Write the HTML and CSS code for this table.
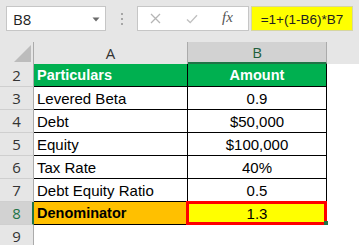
FILE: index.html
```html
<!DOCTYPE html>
<html>
<head>
<meta charset="utf-8">
<link rel="stylesheet" href="styles.css">
</head>
<body>
<div class="app">
  <div class="toolbar">
    <div class="namebox">
      <span class="name">B8</span>
      <svg class="caret" width="8" height="5" viewBox="0 0 8 5"><path d="M0.5 0.5 H7.5 L4 4.5 Z" fill="#6b6b6b"/></svg>
    </div>
    <div class="dots"><i></i><i></i><i></i></div>
    <div class="actions">
      <svg class="icon-x" width="11" height="11" viewBox="0 0 11 11"><path d="M1 1 L10 10 M10 1 L1 10" stroke="#b5b5b5" stroke-width="1.3" fill="none"/></svg>
      <svg class="icon-check" width="12" height="10" viewBox="0 0 12 10"><path d="M1 5.5 L4.2 8.6 L11 1.2" stroke="#c0c0c0" stroke-width="1.4" fill="none"/></svg>
      <span class="fx">fx</span>
    </div>
    <div class="formula">=1+(1-B6)*B7</div>
  </div>
  <div class="grid">
    <div class="corner"><span class="tri"></span></div>
    <div class="colhead">A</div>
    <div class="colhead sel">B</div>
    <div class="colfill"></div>

    <div class="rowhead">2</div>
    <div class="cell a head">Particulars</div>
    <div class="cell b head">Amount</div>
    <div class="fill"></div>

    <div class="rowhead">3</div>
    <div class="cell a">Levered Beta</div>
    <div class="cell b">0.9</div>
    <div class="fill"></div>

    <div class="rowhead">4</div>
    <div class="cell a">Debt</div>
    <div class="cell b">$50,000</div>
    <div class="fill"></div>

    <div class="rowhead">5</div>
    <div class="cell a">Equity</div>
    <div class="cell b">$100,000</div>
    <div class="fill"></div>

    <div class="rowhead">6</div>
    <div class="cell a">Tax Rate</div>
    <div class="cell b">40%</div>
    <div class="fill"></div>

    <div class="rowhead">7</div>
    <div class="cell a">Debt Equity Ratio</div>
    <div class="cell b">0.5</div>
    <div class="fill"></div>

    <div class="rowhead sel">8</div>
    <div class="cell a denom">Denominator</div>
    <div class="cell b result">1.3<span class="selbox"></span><span class="handle"></span></div>
    <div class="fill"></div>

    <div class="rowhead">9</div>
    <div class="cell blank"></div>
    <div class="cell blank"></div>
    <div class="fill"></div>
  </div>
</div>
</body>
</html>
```
FILE: styles.css
```css
* { box-sizing: border-box; }
html, body { margin: 0; padding: 0; background: #ffffff; }
.app { width: 359px; height: 245px; overflow: hidden; font-family: "Liberation Sans", Arial, sans-serif; }

.toolbar {
  height: 42px;
  background: #e6e6e6;
  display: flex;
  align-items: flex-start;
  padding-top: 6px;
  padding-left: 6px;
}
.namebox {
  width: 100px;
  height: 25px;
  background: #fff;
  border: 1px solid #c6c6c6;
  display: flex;
  align-items: center;
  justify-content: space-between;
  padding: 0 5px 0 6px;
}
.name { font-family: "Open Sans", "Noto Sans", sans-serif; font-size: 15px; color: #222; }
.caret { margin-top: 1px; }
.dots {
  width: 31px;
  height: 25px;
  display: flex;
  flex-direction: column;
  align-items: center;
  justify-content: center;
  gap: 3px;
}
.dots i { display: block; width: 2px; height: 2px; background: #a6a6a6; }
.actions {
  width: 112px;
  height: 25px;
  background: #fff;
  border: 1px solid #c6c6c6;
  display: flex;
  align-items: center;
  padding-left: 12px;
}
.icon-x { margin-right: 25px; }
.icon-check { margin-right: 24px; margin-top: 1px; }
.fx { font-family: "Liberation Serif", "Times New Roman", serif; font-style: italic; font-size: 15px; color: #555; margin-top: -2px; }
.formula {
  margin-left: 2px;
  width: 102px;
  height: 25px;
  background: #ffff00;
  border: 1px solid #d6d6a0;
  font-family: "Liberation Sans", Arial, sans-serif;
  font-size: 13.5px;
  color: #222;
  display: flex;
  align-items: center;
  justify-content: center;
  padding-top: 1px;
}

.grid {
  display: grid;
  grid-template-columns: 34px 154px 139px 1fr;
  grid-template-rows: 22px;
  grid-auto-rows: 23px;
}
.corner {
  background: #e6e6e6;
  border-right: 1px solid #ababab;
  position: relative;
}
.tri {
  position: absolute;
  right: 2px;
  bottom: 2px;
  width: 0; height: 0;
  border-left: 17px solid transparent;
  border-bottom: 17px solid #bcbcbc;
}
.colhead {
  background: #e6e6e6;
  border-right: 1px solid #ababab;
  font-family: "Open Sans", "Noto Sans", sans-serif;
  font-size: 15px;
  color: #333;
  display: flex;
  align-items: center;
  justify-content: center;
}
.colhead.sel {
  background: #d2d2d2;
  border-bottom: 2px solid #217346;
  color: #1f5e3b;
}
.colfill { background: #e6e6e6; }

.rowhead {
  background: #e6e6e6;
  border-right: 1px solid #ababab;
  border-bottom: 1px solid #cfcfcf;
  font-family: "Open Sans", "Noto Sans", sans-serif;
  font-size: 15px;
  color: #333;
  display: flex;
  align-items: center;
  justify-content: center;
}
.rowhead.sel {
  background: #d2d2d2;
  border-right: 2px solid #217346;
  color: #217346;
  padding-left: 1px;
}

.cell {
  border-right: 1px solid #000;
  border-bottom: 1px solid #000;
  font-size: 15px;
  color: #000;
  display: flex;
  align-items: center;
  white-space: nowrap;
}
.cell.a { padding-left: 3px; }
.cell.b { justify-content: center; }
.cell.head { background: #00b050; color: #fff; font-weight: bold; font-size: 14.5px; }
.cell.denom { background: #ffc000; font-weight: bold; font-size: 14.5px; }
.cell.result { background: #ffff00; position: relative; }
.cell.blank { border: none; }
.selbox {
  position: absolute;
  left: -2px; top: -1px; right: -1px; bottom: -1px;
  border: 3px solid #ff0000;
}
.handle {
  position: absolute;
  right: -3px; bottom: -2px;
  width: 5px; height: 5px;
  background: #217346;
  border: 1px solid #fff;
  border-top: none; border-left: none;
}
.fill { background: #fff; }
```
